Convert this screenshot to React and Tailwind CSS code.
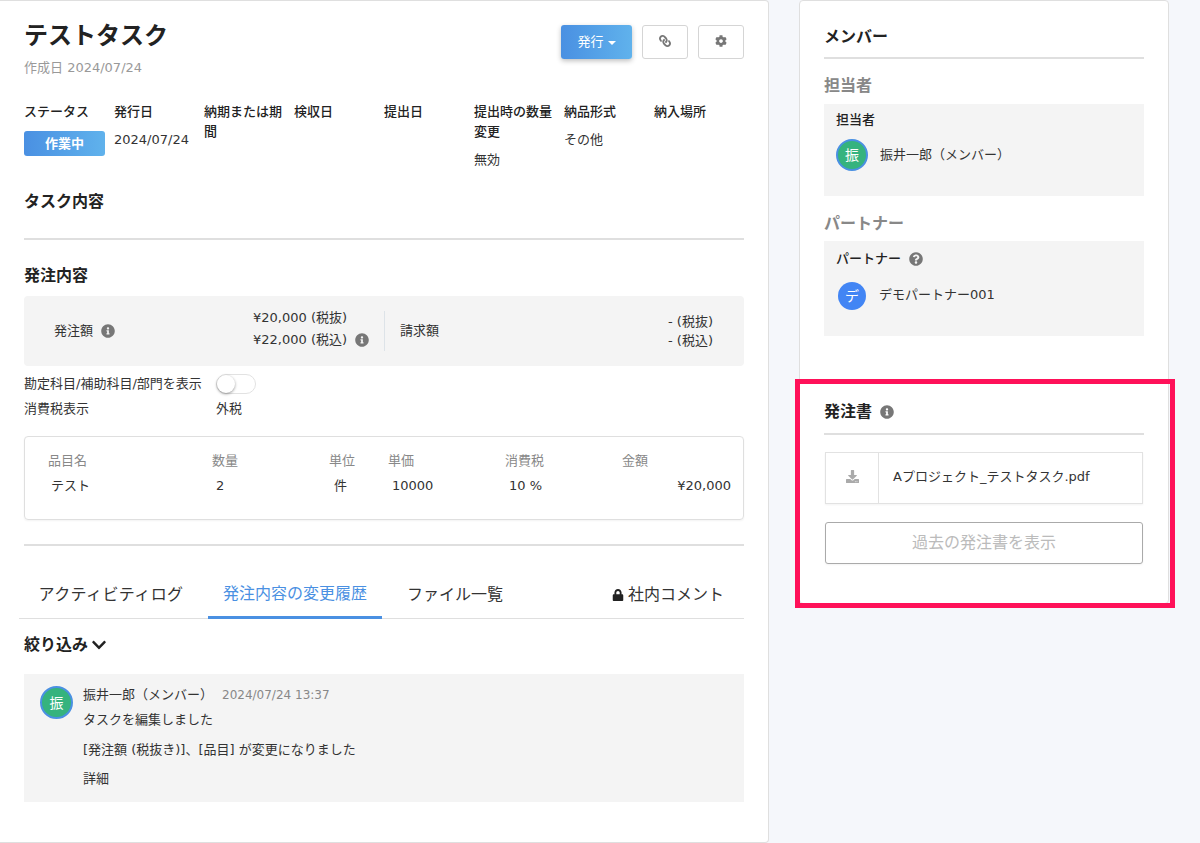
import React from 'react';
import { FaLink, FaCog, FaInfoCircle, FaQuestionCircle, FaDownload, FaLock, FaChevronDown } from 'react-icons/fa';

const fields = [
  { label: 'ステータス', badge: '作業中' },
  { label: '発行日', value: '2024/07/24' },
  { label: '納期または期間' },
  { label: '検収日' },
  { label: '提出日' },
  { label: '提出時の数量変更', value: '無効' },
  { label: '納品形式', value: 'その他' },
  { label: '納入場所' },
];

const Avatar = ({ char, size }) => (
  <div className={`flex ${size} shrink-0 items-center justify-center rounded-full border-2 border-[#4a90e2] bg-[#35b37e] text-sm text-white`}>
    {char}
  </div>
);

const App = () => {
  return (
    <div className="relative flex h-[843px] w-[1200px] items-start overflow-hidden bg-[#f5f7fb] font-['DejaVu_Sans','Noto_Sans_CJK_JP',sans-serif] text-[13px] text-[#333]">
      {/* 左カラム */}
      <div className="h-[843px] w-[769px] shrink-0 rounded-r border border-l-0 border-[#dfdfdf] bg-white px-6 pt-[16px]">
        <div className="flex items-start justify-between">
          <div>
            <h1 className="text-2xl leading-[38px] font-bold text-[#222]">テストタスク</h1>
            <p className="mt-[3px] text-[13px] leading-5 text-[#999]">作成日 2024/07/24</p>
          </div>
          <div className="mt-[8px] flex gap-[10px]">
            <button className="flex h-[34px] w-[71px] items-center justify-center gap-1 rounded-[3px] bg-gradient-to-r from-[#4a90e2] to-[#60b2ec] pb-px text-[13px] text-white shadow-[0_2px_5px_rgba(0,0,0,0.25)]">
              発行
              <span className="mt-[2px] h-0 w-0 border-x-4 border-t-4 border-x-transparent border-t-white" />
            </button>
            <button className="flex h-[34px] w-[46px] items-center justify-center rounded-[3px] border border-[#d5d5d5] bg-white pb-[2px] text-[#777]">
              <FaLink size={12} className="-scale-x-100" />
            </button>
            <button className="flex h-[34px] w-[46px] items-center justify-center rounded-[3px] border border-[#d5d5d5] bg-white pb-[2px] text-[#777]">
              <FaCog size={12} />
            </button>
          </div>
        </div>

        <div className="mt-[24px] grid h-[78px] grid-cols-[repeat(8,90px)]">
          {fields.map(f => (
            <div key={f.label}>
              <div className="pr-[12px] text-[13px] leading-5 font-medium text-[#222]">{f.label}</div>
              {f.badge && (
                <div className="mt-[9px] flex h-[25px] w-[81px] items-center justify-center rounded-[3px] bg-gradient-to-r from-[#4a90e2] to-[#60b2ec] text-[13px] font-bold text-white">
                  {f.badge}
                </div>
              )}
              {f.value && <div className="mt-[8px] whitespace-nowrap text-[13px] leading-5">{f.value}</div>}
            </div>
          ))}
        </div>

        <h2 className="mt-[10px] text-base leading-6 font-bold text-[#222]">タスク内容</h2>
        <div className="mt-[24px] h-[2px] bg-[#dfdfdf]" />

        <h2 className="mt-[24px] text-base leading-6 font-bold text-[#222]">発注内容</h2>
        <div className="mt-[8px] flex h-[70px] items-center rounded bg-[#f4f4f4] pl-[30px] pr-[31px]">
          <div className="flex w-[330px] items-center">
            <div className="flex w-[199px] items-center gap-[8px]">
              発注額
              <FaInfoCircle size={14} className="text-[#777]" />
            </div>
            <div className="mb-1 leading-[22px]">
              <div>¥20,000 (税抜)</div>
              <div className="flex items-center gap-[8px] whitespace-nowrap">
                ¥22,000 (税込)
                <FaInfoCircle size={14} className="text-[#777]" />
              </div>
            </div>
          </div>
          <div className="flex h-10 flex-1 items-center justify-between border-l border-[#dde3e8] pl-[15px]">
            <span>請求額</span>
            <div className="leading-[19px]">
              <div>- (税抜)</div>
              <div>- (税込)</div>
            </div>
          </div>
        </div>

        <div className="mt-[8px] flex h-[20px] items-center">
          <span className="w-[192px]">勘定科目/補助科目/部門を表示</span>
          <div className="flex h-[20px] w-10 items-center rounded-full border border-[#e2e2e2] bg-white">
            <div className="h-[18px] w-[18px] rounded-full bg-white shadow-[0_1px_3px_rgba(0,0,0,0.4)]" />
          </div>
        </div>
        <div className="mt-[5px] flex h-5 items-center">
          <span className="w-[192px]">消費税表示</span>
          <span>外税</span>
        </div>

        <div className="mt-[17px] h-[84px] rounded border border-[#dfdfdf] shadow-[0_1px_2px_rgba(0,0,0,0.05)]">
          <div className="mt-[14px] flex h-5 items-center pl-[23px] text-[#888]">
            <span className="w-[164px]">品目名</span>
            <span className="w-[117px]">数量</span>
            <span className="w-[59px]">単位</span>
            <span className="w-[117px]">単価</span>
            <span className="w-[117px]">消費税</span>
            <span>金額</span>
          </div>
          <div className="mt-[5px] flex h-5 items-center pl-[26px] pr-[12px]">
            <span className="w-[165px]">テスト</span>
            <span className="w-[118px]">2</span>
            <span className="w-[58px]">件</span>
            <span className="w-[117px]">10000</span>
            <span className="w-[117px]">10 %</span>
            <span className="flex-1 text-right">¥20,000</span>
          </div>
        </div>

        <div className="mt-[24px] h-[2px] bg-[#dfdfdf]" />

        <div className="-ml-[5px] mt-[27px] flex h-[46px] items-stretch border-b border-[#dfdfdf] text-base">
          <div className="flex w-[189px] items-center justify-center pb-px pr-[5px] tracking-[0.4px]">アクティビティログ</div>
          <div className="-mb-px flex w-[174px] items-center justify-center border-b-[3px] border-[#4a90e2] pb-px text-[#4a90e2]">発注内容の変更履歴</div>
          <div className="flex w-[146px] items-center justify-center pb-px">ファイル一覧</div>
          <div className="ml-auto mr-[20px] flex items-center gap-[4px] pb-px">
            <FaLock size={12} className="text-[#222]" />
            社内コメント
          </div>
        </div>

        <div className="mt-[16px] flex h-5 items-center gap-[3px] text-base font-bold text-[#222]">
          絞り込み
          <FaChevronDown size={16} />
        </div>

        <div className="mt-[19px] flex h-[128px] bg-[#f4f4f4] pl-4 pt-3">
          <Avatar char="振" size="h-[33px] w-[33px]" />
          <div className="-mt-px ml-[10px] text-[13px]">
            <div className="flex h-5 items-center">
              <span>振井一郎（メンバー）</span>
              <span className="ml-[9px] text-[12px] text-[#888]">2024/07/24 13:37</span>
            </div>
            <div className="mt-[5px] h-5 leading-5">タスクを編集しました</div>
            <div className="mt-[10px] h-5 leading-5">[発注額 (税抜き)]、[品目] が変更になりました</div>
            <div className="mt-[9px] h-5 leading-5">詳細</div>
          </div>
        </div>
      </div>

      {/* 右カラム */}
      <div className="ml-[30px] h-[604px] w-[370px] shrink-0 rounded border border-[#dfdfdf] bg-white px-6 pt-[24px]">
        <h2 className="text-base leading-6 font-bold text-[#222]">メンバー</h2>
        <div className="mt-[8px] h-[2px] bg-[#dfdfdf]" />
        <h3 className="mt-[15px] text-base leading-6 font-bold text-[#888]">担当者</h3>
        <div className="mt-[6px] h-[92px] bg-[#f4f4f4] px-3 pt-[6px]">
          <div className="h-5 leading-5 font-medium text-[#222]">担当者</div>
          <div className="mt-[9px] flex items-center gap-[12px]">
            <Avatar char="振" size="h-8 w-8" />
            <span>振井一郎（メンバー）</span>
          </div>
        </div>
        <h3 className="mt-[16px] text-base leading-6 font-bold text-[#888]">パートナー</h3>
        <div className="mt-[5px] h-[95px] bg-[#f4f4f4] px-3 pt-[8px]">
          <div className="flex h-5 items-center gap-[8px] font-medium text-[#222]">
            パートナー
            <FaQuestionCircle size={14} className="text-[#777]" />
          </div>
          <div className="ml-[2px] mt-[13px] flex items-center gap-[13px]">
            <div className="flex h-7 w-7 shrink-0 items-center justify-center rounded-full bg-[#4285f4] text-sm text-white">デ</div>
            <span className="mb-[2px]">デモパートナー001</span>
          </div>
        </div>

        <div className="mt-[64px] flex h-6 items-center gap-[8px] text-base font-bold text-[#222]">
          発注書
          <FaInfoCircle size={14} className="text-[#777]" />
        </div>
        <div className="mt-[9px] h-[2px] bg-[#dfdfdf]" />
        <div className="mx-px mt-[17px] flex h-[52px] border border-[#e2e2e2] shadow-[0_1px_2px_rgba(0,0,0,0.05)]">
          <div className="flex w-[53px] items-center justify-center border-r border-[#e2e2e2] pb-[3px] text-[#aaa]">
            <FaDownload size={13} />
          </div>
          <div className="flex flex-1 items-center pl-[14px] pb-[2px]">Aプロジェクト_テストタスク.pdf</div>
        </div>
        <button className="mx-px mt-[18px] h-[42px] w-[318px] rounded-[3px] border border-[#aaa] bg-white text-base text-[#bbb] shadow-[0_1px_2px_rgba(0,0,0,0.05)]">
          過去の発注書を表示
        </button>
      </div>

      {/* 強調枠 */}
      <div className="pointer-events-none absolute left-[795px] top-[379px] h-[229px] w-[380px] border-[5px] border-[#ff1159]" />
    </div>
  );
};

export default App;
